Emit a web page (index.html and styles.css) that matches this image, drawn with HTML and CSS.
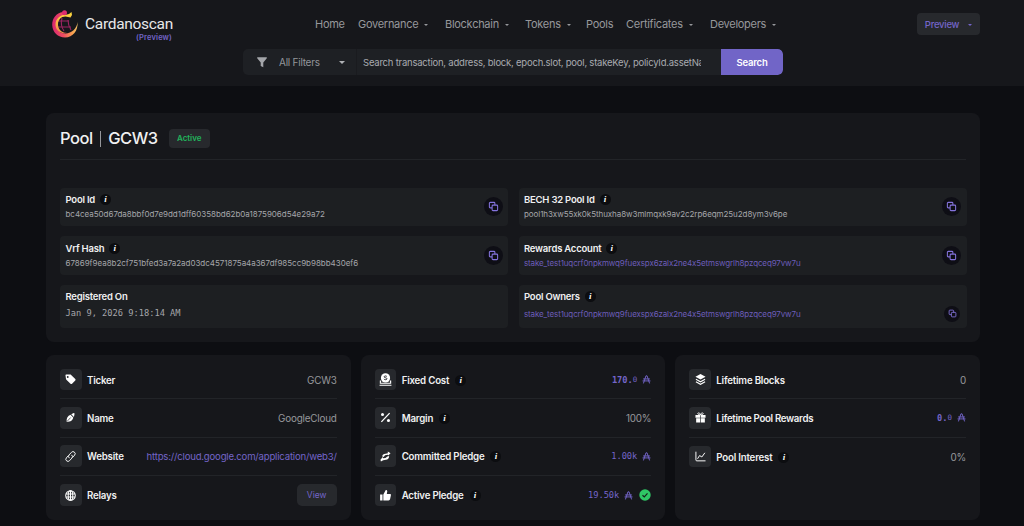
FILE: index.html
```html
<!DOCTYPE html>
<html lang="en">
<head>
<meta charset="UTF-8">
<meta name="viewport" content="width=device-width, initial-scale=1.0">
<title>Pool GCW3 - Cardanoscan</title>
<link rel="stylesheet" href="styles.css">
</head>
<body>
<svg class="sprite">
  <symbol id="copy" viewBox="0 0 24 24"><path d="M9 15H5a2 2 0 0 1-2-2V5a2 2 0 0 1 2-2h8a2 2 0 0 1 2 2v4M11 9h8a2 2 0 0 1 2 2v8a2 2 0 0 1-2 2h-8a2 2 0 0 1-2-2v-8a2 2 0 0 1 2-2z" fill="none" stroke="currentColor" stroke-width="2.3"/></symbol>
  <symbol id="ada" viewBox="0 0 16 16"><path d="M2.5 15L7 1.5h2L13.500 15M2 7h12M1 10.500h14" fill="none" stroke="currentColor" stroke-width="1.7"/></symbol>
</svg>

<header>
  <div class="topbar">
    <a class="brand">
      <svg class="brand-mark" viewBox="0 0 28 30">
        <defs>
          <linearGradient id="ring" x1="0" y1="0" x2="1" y2="0"><stop offset="0" stop-color="#d9286f"/><stop offset=".45" stop-color="#ee4d62"/><stop offset=".8" stop-color="#f7a14e"/><stop offset="1" stop-color="#f3c56a"/></linearGradient>
          <linearGradient id="inner" x1="0" y1="0" x2="0" y2="1"><stop offset="0" stop-color="#fbdc3c"/><stop offset="1" stop-color="#f58a4e"/></linearGradient>
        </defs>
        <g fill="none" stroke="#9c2463" stroke-width="1.100"><path d="M7 12h11M7 18h13M11 9c-1 4-1 9 2 13M17 11c0 4 1 7 3 10"/></g>
        <path d="M12 3C5 4 1.200 9.500 1.200 16 1.500 23.500 7 28.500 14 28.500c8 0 13.200-7 12.600-15.500C26 19.500 20.500 24.500 14.500 24.500 9 24.500 5.500 21 5.500 16 5.500 11 9 8 13 7z" fill="url(#ring)"/>
        <path d="M16 5.500l2-.5 2.500-2 .5 3-1.500 2.500-5-1C10 7.500 7 11 7 15.500c0 5 4 8.500 9 8.300-6 1.700-11.500-2.300-11.500-8.300C4.500 10 9 5.500 16 5.500z" fill="url(#inner)"/>
        <circle cx="13.500" cy="3.800" r="2.500" fill="#dd2c6e"/>
      </svg>
      <span class="brand-text"><span class="brand-name">Cardanoscan</span><span class="brand-net">(Preview)</span></span>
    </a>
    <nav>
      <a class="nav-home">Home</a>
      <a class="drop nav-gov">Governance</a>
      <a class="drop nav-block">Blockchain</a>
      <a class="drop nav-tok">Tokens</a>
      <a class="nav-pools">Pools</a>
      <a class="drop nav-cert">Certificates</a>
      <a class="drop nav-dev">Developers</a>
    </nav>
    <button class="network drop">Preview</button>
  </div>
  <div class="search">
    <div class="filter">
      <svg viewBox="0 0 10 11"><path d="M.2.3h9.600v1L6.300 5.500v4.800L3.700 9V5.500L.2 1.300z" fill="#a3a5a9"/></svg>
      <span>All Filters</span>
    </div>
    <div class="query"><span>Search transaction, address, block, epoch.slot, pool, stakeKey, policyId.assetNa</span></div>
    <button class="search-btn">Search</button>
  </div>
</header>

<main>
  <section class="card pool">
    <div class="pool-head">
      <h1>Pool <i></i> GCW3</h1>
      <span class="badge">Active</span>
    </div>
    <div class="fields">
      <div class="field">
        <div><div class="label">Pool Id <i class="info">i</i></div><div class="hash">bc4cea50d67da8bbf0d7e9dd1dff60358bd62b0a1875906d54e29a72</div></div>
        <span class="copy"><svg><use href="#copy"/></svg></span>
      </div>
      <div class="field">
        <div><div class="label">BECH 32 Pool Id <i class="info">i</i></div><div class="hash bech">pool1h3xw55xk0k5thuxha8w3mlmqxk9av2c2rp6eqm25u2d8ym3v6pe</div></div>
        <span class="copy"><svg><use href="#copy"/></svg></span>
      </div>
      <div class="field">
        <div><div class="label">Vrf Hash <i class="info">i</i></div><div class="hash">67869f9ea8b2cf751bfed3a7a2ad03dc4571875a4a367df985cc9b98bb430ef6</div></div>
        <span class="copy"><svg><use href="#copy"/></svg></span>
      </div>
      <div class="field">
        <div><div class="label">Rewards Account <i class="info">i</i></div><div class="hash link">stake_test1uqcrf0npkmwq9fuexspx6zalx2ne4x5etmswgrlh8pzqceq97vw7u</div></div>
        <span class="copy"><svg><use href="#copy"/></svg></span>
      </div>
      <div class="field tall">
        <div><div class="label">Registered On</div><div class="date">Jan 9, 2026 9:18:14 AM</div></div>
      </div>
      <div class="field tall">
        <div><div class="label">Pool Owners <i class="info">i</i></div><div class="hash link">stake_test1uqcrf0npkmwq9fuexspx6zalx2ne4x5etmswgrlh8pzqceq97vw7u</div></div>
        <span class="copy small"><svg><use href="#copy"/></svg></span>
      </div>
    </div>
  </section>

  <div class="stats">
    <section class="card">
      <div class="row">
        <span class="icon"><svg viewBox="0 0 24 24"><path fill-rule="evenodd" d="M1 2.500A1.500 1.500 0 0 1 2.500 1H11c1 0 1.700.3 2.400 1l9 9c1 1 1 2.300 0 3.300l-7 7c-1 1-2.400 1-3.400 0l-9-9c-.7-.7-1-1.400-1-2.300zM6 4.500a2 2 0 1 0 0 4 2 2 0 0 0 0-4z" fill="#fff"/></svg></span>
        <span class="name">Ticker</span><span class="value">GCW3</span>
      </div>
      <div class="row">
        <span class="icon"><svg viewBox="0 0 24 24"><path d="M3.500 22C3 13 6 8 12 6l6 6c-1 6-5 9-14.500 10zM13.500 5l5.500-3 2 1-1.500 8z" fill="#fff"/><path d="M4 21l8.500-9" stroke="#27292d" stroke-width="1.500"/></svg></span>
        <span class="name">Name</span><span class="value">GoogleCloud</span>
      </div>
      <div class="row">
        <span class="icon"><svg viewBox="0 0 24 24"><path d="M9 15a4.500 4.500 0 0 1 0-6.500l5-5.500a4.500 4.500 0 0 1 7 6l-4 4.500M15 9a4.500 4.500 0 0 1 0 6.500L10 21a4.500 4.500 0 0 1-7-6l4-4.500" fill="none" stroke="#fff" stroke-width="2.100" stroke-linecap="round"/></svg></span>
        <span class="name">Website</span><a class="value url">https://cloud.google.com/application/web3/</a>
      </div>
      <div class="row">
        <span class="icon"><svg viewBox="0 0 24 24"><g fill="none" stroke="#fff" stroke-width="2.200"><circle cx="12" cy="12" r="10.500"/><ellipse cx="12" cy="12" rx="5" ry="10.500"/><path d="M2.500 8.500h19M2.500 15.500h19M12 2v20"/></g></svg></span>
        <span class="name">Relays</span><button class="view">View</button>
      </div>
    </section>

    <section class="card">
      <div class="row">
        <span class="icon"><svg class="big" viewBox="0 0 24 24"><circle cx="12" cy="9" r="8.500" fill="#fff"/><path d="M14.500 6.500c-1-1.500-5-1.500-5 .6 0 2.200 5.200 1.200 5.200 3.600 0 2.300-4.700 2-5.700.3" stroke="#25272b" stroke-width="1.800" fill="none"/><path d="M4 15H2.500v4h19v-4H20M1 22.500h22" stroke="#fff" stroke-width="2" fill="none"/></svg></span>
        <span class="name">Fixed Cost <i class="info">i</i></span><span class="value ada"><b>170.</b><small>0</small><svg><use href="#ada"/></svg></span>
      </div>
      <div class="row">
        <span class="icon"><svg viewBox="0 0 24 24"><path d="M3 21.500L21 2.500" stroke="#fff" stroke-width="2.800"/><circle cx="5.500" cy="5.500" r="3.300" fill="#fff"/><circle cx="18.500" cy="18.500" r="3.300" fill="#fff"/></svg></span>
        <span class="name">Margin <i class="info">i</i></span><span class="value">100%</span>
      </div>
      <div class="row">
        <span class="icon"><svg viewBox="0 0 24 24"><path d="M5 12c0-4 3-6 7-6l5-1V1l6 4-5 5-1-2-6 1.500-3 3.500zM20 11c0 5-3 8-7 8l-6 1-5 3-1-4 5-6 1 3 5-.500 4-3.500z" fill="#fff"/></svg></span>
        <span class="name">Committed Pledge <i class="info">i</i></span><span class="value ada">1.00k<svg><use href="#ada"/></svg></span>
      </div>
      <div class="row">
        <span class="icon"><svg class="big" viewBox="0 0 24 24"><path d="M2 10h4.500v11H2zM8 10l4.500-8c2 0 3 1.300 2.700 3l-.8 4H20c1.500 0 2.300 1 2 2.500l-1.500 7c-.4 1.700-1.300 2.500-3 2.500H8z" fill="#fff"/></svg></span>
        <span class="name">Active Pledge <i class="info">i</i></span><span class="value ada">19.50k<svg><use href="#ada"/></svg></span>
        <svg class="check" viewBox="0 0 12 12"><circle cx="6" cy="6" r="5.700" fill="#2fc765"/><path d="M3.500 6.200l1.800 1.700 3.200-3.500" fill="none" stroke="#15221a" stroke-width="1.200"/></svg>
      </div>
    </section>

    <section class="card">
      <div class="row">
        <span class="icon"><svg viewBox="0 0 24 24"><path d="M12 0l11 6-11 6L1 6z" fill="#fff"/><path d="M2 11.500l10 5.500 10-5.500M2 17l10 5.500L22 17" stroke="#fff" stroke-width="2.300" fill="none"/></svg></span>
        <span class="name">Lifetime Blocks</span><span class="value">0</span>
      </div>
      <div class="row">
        <span class="icon"><svg viewBox="0 0 24 24"><path d="M1 6.500h10.300v6H1zM12.700 6.500H23v6H12.700zM2.500 13.500h8.800V23H2.500zM12.700 13.500h8.800V23h-8.800z" fill="#fff"/><path d="M12 6C8 6 6 5 6 3.500S10 0 12 6c2-6 6-4 6-2.500S16 6 12 6z" fill="none" stroke="#fff" stroke-width="2"/></svg></span>
        <span class="name long">Lifetime Pool Rewards</span><span class="value ada"><b>0.</b><small>0</small><svg><use href="#ada"/></svg></span>
      </div>
      <div class="row">
        <span class="icon"><svg viewBox="0 0 24 24"><path d="M2 1.500v18q0 2 2 2h19M5.500 17l4.500-7 5 3 6.500-9" fill="none" stroke="#fff" stroke-width="2.100"/></svg></span>
        <span class="name">Pool Interest <i class="info">i</i></span><span class="value">0%</span>
      </div>
    </section>
  </div>
</main>
</body>
</html>
```
FILE: styles.css
```css
:root {
  --bg: #0d0e12; --panel: #16171b; --field: #1d1f22; --chip: #27292d;
  --text: #f0f0f1; --muted: #96989c; --purple: #7465c9;
}
* { box-sizing: border-box; margin: 0; padding: 0; }
body { font-family: Inter, sans-serif; background: var(--bg); color: var(--text); font-size: 10px; height: 526px; overflow: hidden; }
button { border: none; font-family: inherit; }
i { font-style: normal; }
.sprite { display: none; }

header { background: var(--panel); height: 86px; padding: 0 44px 0 51px; }
.topbar { height: 49px; display: flex; align-items: center; }
.brand { display: flex; align-items: flex-start; padding-top: 1px; width: 264px; }
.brand-mark { width: 28px; height: 30px; }
.brand-text { display: flex; flex-direction: column; align-items: flex-end; margin-left: 6px; padding-top: 6px; }
.brand-name { font-family: Roboto, sans-serif; font-size: 15.500px; letter-spacing: -0.300px; line-height: 18px; color: #e8e8e9; }
.brand-net { font-size: 7.500px; font-weight: 600; line-height: 9px; color: var(--purple); letter-spacing: 0.150px; margin-right: 1px; }
nav { display: flex; color: var(--muted); font-size: 11px; line-height: 14px; letter-spacing: -0.280px; margin-top: -1px; }
nav a { white-space: nowrap; }
.nav-home { width: 43px; }
.nav-gov { width: 87px; }
.nav-block { width: 80px; }
.nav-tok { width: 61px; }
.nav-pools { width: 40px; }
.nav-cert { width: 84px; }
.drop::after { content: ''; display: inline-block; border: 2px solid transparent; border-top: 2.500px solid; border-bottom: 0; margin-left: 6px; vertical-align: 2px; }
.network { margin-left: auto; width: 63px; height: 22px; border-radius: 4px; background: var(--chip); color: var(--purple); font-size: 9.500px; font-weight: 500; letter-spacing: -0.250px; margin-top: -1px; }
.network::after { margin-left: 9px; }

.search { display: flex; width: 540px; height: 26px; margin-left: 192px; background: #1e2024; border-radius: 5px; overflow: hidden; }
.filter { width: 114px; display: flex; align-items: center; padding-left: 14px; color: #94969b; border-right: 1px solid #1a1b1f; letter-spacing: -0.250px; }
.filter svg { width: 10px; height: 11px; margin-right: 12px; }
.filter::after { content: ''; border: 3px solid transparent; border-top: 3.500px solid #b0b2b5; border-bottom: 0; margin-left: auto; margin-right: 11px; }
.query { width: 338px; margin-left: 6px; padding-top: 7px; font-size: 9.500px; letter-spacing: -0.220px; line-height: 13px; white-space: nowrap; overflow: hidden; color: #a9abb0; }
.search-btn { margin-left: auto; width: 62px; background: #7165c7; color: #fff; font-size: 9.500px; font-weight: 600; letter-spacing: -0.200px; border-radius: 0 5px 5px 0; }

main { padding: 27px 44px 0 46px; }
.card { background: var(--panel); border-radius: 8px; }
.pool { height: 229px; padding: 0 14px; }
.pool-head { height: 47px; border-bottom: 1px solid #222428; display: flex; align-items: center; padding-top: 4px; }
h1 { font-size: 16.500px; font-weight: 500; line-height: 22px; letter-spacing: -0.450px; }
h1 i { display: inline-block; width: 1.500px; height: 16px; margin: 0 3px 0 3px; background: #96979b; vertical-align: -3px; }
.badge { margin-left: 11px; width: 41px; height: 19px; line-height: 18px; text-align: center; border-radius: 4px; background: var(--chip); color: #22b45c; font-size: 8px; font-weight: 600; }
.fields { display: grid; grid-template-columns: 448px 448px; column-gap: 10.500px; row-gap: 10px; margin-top: 27.500px; }
.field { height: 38.500px; background: var(--field); border-radius: 4px; padding: 4px 5.500px; display: flex; align-items: center; justify-content: space-between; }
.label { height: 15px; display: flex; align-items: center; font-size: 9.500px; font-weight: 600; letter-spacing: -0.220px; }
.info { display: inline-flex; align-items: center; justify-content: center; width: 11px; height: 11px; margin-left: 5px; border-radius: 50%; background: #0c0d10; color: #fff; font: italic bold 9px/11px "Liberation Serif", serif; letter-spacing: 0; }
.hash { font-size: 8px; line-height: 14px; color: #a5a6aa; white-space: nowrap; letter-spacing: -0.030px; }
.bech { letter-spacing: -0.070px; }
.link { color: #6c5db9; letter-spacing: -0.130px; }
.tall { height: 43.500px; align-items: flex-start; }
.tall .hash { margin-top: 3px; }
.date { font: 8.700px/14px "DejaVu Sans Mono", monospace; margin-top: 2px; color: #a5a6aa; }
.copy { width: 19px; height: 19px; border-radius: 50%; background: #0e0e15; color: #8473dc; display: flex; align-items: center; justify-content: center; flex-shrink: 0; }
.copy svg { width: 11px; height: 11px; }
.copy.small { width: 16px; height: 16px; margin: 17px 1px 0 0; }
.copy.small svg { width: 9px; height: 9px; }

.stats { display: grid; grid-template-columns: repeat(3, 1fr); gap: 10px; margin-top: 13px; }
.stats .card { height: 165px; padding: 6px 14px; }
.row { height: 38.300px; display: flex; align-items: center; border-bottom: 1px solid #222428; }
.row:last-child { border-bottom: 0; }
.icon { width: 21.500px; height: 21.500px; border-radius: 4px; background: var(--chip); display: flex; align-items: center; justify-content: center; margin-right: 5.500px; }
.icon svg { width: 11px; height: 11px; }
.icon .big { width: 13px; height: 13px; }
.name { display: flex; align-items: center; font-weight: 600; font-size: 9.700px; letter-spacing: -0.200px; padding-top: 1px; }
.name.long { letter-spacing: -0.320px; }
.name .info { margin-left: 6px; }
.value { margin-left: auto; color: var(--muted); font-size: 9.900px; letter-spacing: -0.200px; padding-top: 1px; }
.url { color: var(--purple); font-size: 9.600px; letter-spacing: -0.210px; }
.ada { display: flex; align-items: center; font: 8.700px "DejaVu Sans Mono", monospace; letter-spacing: 0; color: var(--purple); padding-top: 0; }
.ada small { font-size: 7.500px; }
.ada svg { width: 9px; height: 9px; margin-left: 5px; }
.check { width: 12px; height: 12px; margin-left: 6px; }
.view { margin-left: auto; width: 40px; height: 22px; border-radius: 5px; background: var(--chip); color: var(--purple); font-size: 8.500px; }
```
